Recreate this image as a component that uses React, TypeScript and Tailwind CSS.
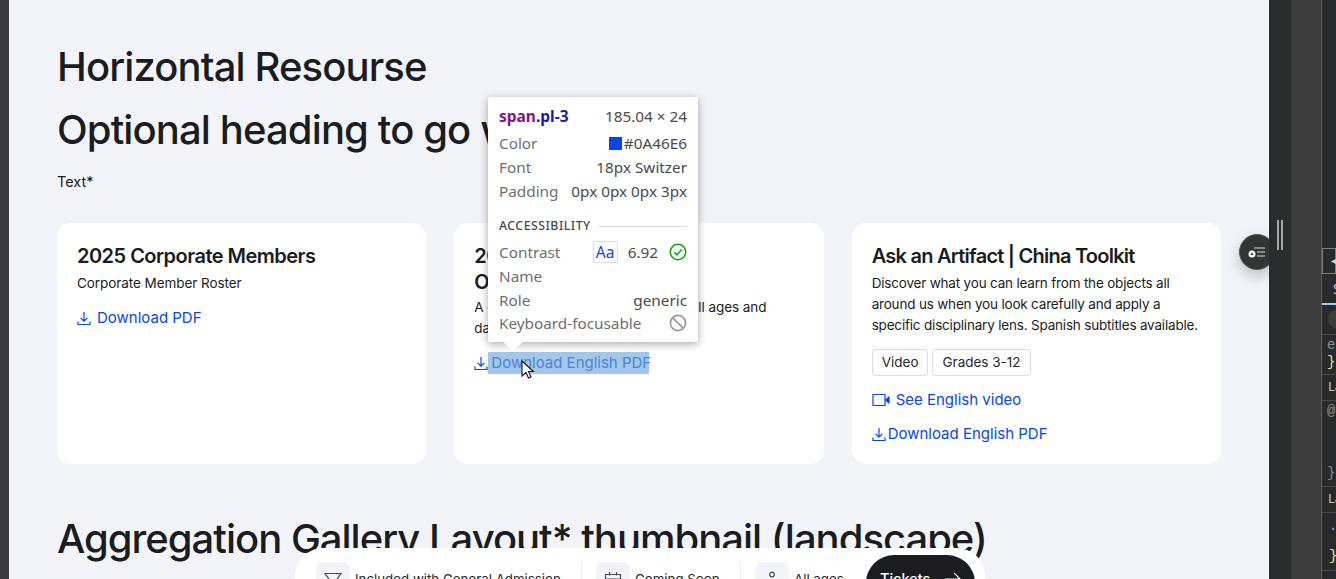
import React from "react";

const inter = "font-['Inter',sans-serif]";

function DownloadIcon({ className = "" }: { className?: string }) {
  return (
    <svg width="14" height="15" viewBox="0 0 14 15" fill="none" stroke="#0a46e6" strokeWidth="1.2" className={className}>
      <path d="M7 1v9M3.600 6.800 7 10.200l3.400-3.400M1 10.500v3h12v-3" />
    </svg>
  );
}

function Tag({ children }: { children: React.ReactNode }) {
  return (
    <span className="h-[27px] px-[9px] flex items-center rounded-[3px] border border-[#dcdde3] text-[13.5px] text-[#27282c]">
      {children}
    </span>
  );
}

function Row({ label, children }: { label: string; children?: React.ReactNode }) {
  return (
    <div className="h-[24px] flex items-center justify-between">
      <span className="text-[#6f6f6f]">{label}</span>
      <span className="flex items-center text-[#4a4a4a]">{children}</span>
    </div>
  );
}

function Tooltip() {
  return (
    <div className="absolute left-[479px] top-[97px] w-[210px] h-[245px] bg-white rounded-[3px] shadow-[0_2px_8px_rgba(0,0,0,0.35)] px-[11px] pt-[7px] text-[15.300px] leading-[24px] font-['Noto_Sans',sans-serif]">
      <div className="h-[24px] mb-[3px] flex items-center justify-between">
        <span className="font-bold text-[15.500px]">
          <span className="text-[#881280]">span</span>
          <span className="text-[#1a1aa6]">.pl-3</span>
        </span>
        <span className="text-[#4a4a4a]">185.04 × 24</span>
      </div>
      <Row label="Color">
        <span className="w-[13px] h-[13px] bg-[#0a46e6] mr-[2px]" />
        #0A46E6
      </Row>
      <Row label="Font">18px Switzer</Row>
      <Row label="Padding">0px 0px 0px 3px</Row>
      <div className="flex items-center gap-[8px] mt-[11px] h-[24px]">
        <span className="text-[12.300px] font-medium tracking-[0.04em] text-[#4a4a4a]">ACCESSIBILITY</span>
        <span className="flex-1 h-px bg-[#dadada]" />
      </div>
      <div className="h-[24px] mt-[2px] flex items-center">
        <span className="text-[#6f6f6f] flex-1">Contrast</span>
        <span className="w-[25px] h-[22px] border border-[#dcdcdc] text-[#0a46e6] flex items-center justify-center text-[15.500px]">Aa</span>
        <span className="text-[#4a4a4a] ml-[10px] mr-[11px]">6.92</span>
        <svg width="18" height="18" viewBox="0 0 17 17" fill="none" stroke="#0ca30c" strokeWidth="1.4">
          <circle cx="8.500" cy="8.500" r="7.300" />
          <path d="m5 8.700 2.500 2.500 4.600-5" />
        </svg>
      </div>
      <Row label="Name" />
      <Row label="Role">generic</Row>
      <div className="h-[23px] mt-[-1px] flex items-center justify-between">
        <span className="text-[#6f6f6f]">Keyboard-focusable</span>
        <svg width="18" height="18" viewBox="0 0 17 17" fill="none" stroke="#9a9a9a" strokeWidth="1.600">
          <circle cx="8.500" cy="8.500" r="7.200" />
          <path d="m3.400 3.400 10.200 10.200" />
        </svg>
      </div>
      <span className="absolute left-[15px] bottom-[-9px] w-0 h-0 border-l-[10px] border-r-[10px] border-t-[9px] border-l-transparent border-r-transparent border-t-white" />
    </div>
  );
}

function BottomItem({ label, icon, divider = true, width }: { label: string; icon: React.ReactNode; divider?: boolean; width: string }) {
  return (
    <div className={`flex items-start gap-[5px] h-[32px] mt-[14px] shrink-0 ${width} ${divider ? "border-r border-[#eceef3]" : ""}`}>
      <span className="w-[34px] h-[34px] rounded-[8px] bg-[#f3f4fa] flex items-center justify-center shrink-0 pt-[4px]">{icon}</span>
      <span className="text-[13.300px] leading-[34px] text-[#27282c] whitespace-nowrap">{label}</span>
    </div>
  );
}

function BottomBar() {
  return (
    <div className={`absolute left-[286px] top-[548px] w-[690px] h-[70px] bg-white rounded-t-[28px] flex pl-[21px] gap-[14px] ${inter}`}>
      <BottomItem
        width="w-[266px]"
        label="Included with General Admission"
        icon={
          <svg width="20" height="20" viewBox="0 0 20 20" fill="none" stroke="#4a4b50" strokeWidth="1.200">
            <path d="M2 2.500h16l-5 7v8H7v-8z" />
            <path d="M9 6h.01M11 8h.01" />
          </svg>
        }
      />
      <BottomItem
        width="w-[145px]"
        label="Coming Soon"
        icon={
          <svg width="18" height="20" viewBox="0 0 18 20" fill="none" stroke="#4a4b50" strokeWidth="1.200">
            <path d="M1.500 3.500h15v14h-15zM1.500 8h15M5.500 1v3.500M12.500 1v3.500" />
          </svg>
        }
      />
      <BottomItem
        width="w-[97px]"
        divider={false}
        label="All ages"
        icon={
          <svg width="18" height="20" viewBox="0 0 18 20" fill="none" stroke="#4a4b50" strokeWidth="1.200">
            <circle cx="9" cy="3.500" r="2.300" />
            <path d="M4 17c0-4 2-6 5-6s5 2 5 6" />
          </svg>
        }
      />
      <div className="mt-[7px] w-[109px] h-[56px] rounded-[28px] bg-[#1b1c20] text-white text-[14.500px] font-medium flex items-start pt-[13px] pl-[14px] gap-[15px] leading-[22px] shrink-0">
        Tickets
        <svg width="16" height="14" viewBox="0 0 16 14" fill="none" stroke="#fff" strokeWidth="1.200" className="mt-[4px]">
          <path d="M0 7h15M9 1l6 6-6 6" />
        </svg>
      </div>
    </div>
  );
}

function Card({ children }: { children: React.ReactNode }) {
  return <div className="flex-1 h-[241px] bg-white rounded-[14px] px-[20px] pt-[20px] text-[#1b1c20]">{children}</div>;
}

const cardTitle = "text-[20px] leading-[26px] font-semibold text-[#1b1c20]";
const cardBody = "text-[13.500px] leading-[21px] text-[#1b1c20]";
const link = "text-[15px] leading-[24px] text-[#0a46e6]";

export default function App() {
  return (
    <div className={`w-[1336px] h-[579px] overflow-hidden flex bg-[#2a2b2b] ${inter}`}>
      <div className="w-[9px] bg-[#3b3b3b] shrink-0" />
      <main className="w-[1260px] shrink-0 relative overflow-hidden bg-[#f3f4fa] pl-[48px] pr-[48px] pt-[41px]">
        <h1 className="text-[40px] leading-[52px] font-medium tracking-[-0.022em] text-[#1b1c20]">Horizontal Resourse</h1>
        <h2 className="mt-[11px] text-[40px] leading-[52px] font-medium tracking-[-0.022em] text-[#1b1c20] whitespace-nowrap">
          Optional heading to go with it
        </h2>
        <p className="mt-[15px] text-[14.500px] leading-[22px] text-[#1b1c20]">Text*</p>

        <div className="mt-[30px] flex gap-[28px]">
          <Card>
            <h3 className={`${cardTitle} tracking-[-0.026em]`}>2025 Corporate Members</h3>
            <p className={`${cardBody} tracking-[-0.005em] mt-[4px]`}>Corporate Member Roster</p>
            <div className={`${link} mt-[12px] flex items-center gap-[6px]`}>
              <DownloadIcon />
              Download PDF
            </div>
          </Card>
          <Card>
            <h3 className={`${cardTitle} tracking-[-0.03em]`}>
              2025 Ask an Artifact
              <br />
              Online Toolkit
            </h3>
            <p className={`${cardBody} tracking-[-0.005em] mt-[2px] whitespace-nowrap`}>
              A closer look at Asian artifacts for all ages and
              <br />
              daily practice
            </p>
            <div className={`${link} mt-[13px] flex items-center`}>
              <DownloadIcon />
              <span className="pl-[3px] h-[22px] leading-[22px] bg-[#a3c7e8] text-[#4a84dc] w-[161px] whitespace-nowrap">Download English PDF</span>
            </div>
          </Card>
          <Card>
            <h3 className={`${cardTitle} tracking-[-0.038em]`}>Ask an Artifact | China Toolkit</h3>
            <p className={`${cardBody} tracking-[-0.014em] mt-[4px]`}>
              Discover what you can learn from the objects all around us when you look carefully and apply a specific disciplinary lens. Spanish subtitles available.
            </p>
            <div className="mt-[13px] flex gap-[4px]">
              <Tag>Video</Tag>
              <Tag>Grades 3-12</Tag>
            </div>
            <div className={`${link} mt-[12px] flex items-center gap-[6px]`}>
              <svg width="18" height="14" viewBox="0 0 18 14" fill="none" stroke="#0a46e6" strokeWidth="1.200">
                <path d="M1 1.500h12v11H1z" />
                <path d="m13.500 7 3.500-3v6z" fill="#0a46e6" />
              </svg>
              See English video
            </div>
            <div className={`${link} mt-[10px] flex items-center`}>
              <DownloadIcon />
              <span className="pl-[2px]">Download English PDF</span>
            </div>
          </Card>
        </div>

        <h2 className="mt-[49px] text-[40px] leading-[52px] font-medium tracking-[-0.025em] text-[#1b1c20] whitespace-nowrap">
          Aggregation Gallery Layout* thumbnail (landscape)
        </h2>

        <Tooltip />
        <BottomBar />

        {/* pointer */}
        <svg width="14" height="20" viewBox="0 0 14 20" className="absolute left-[512px] top-[360px]">
          <path d="M1 1v15l4-3.500 2.500 5.500 2.500-1-2.500-5.500H12.500z" fill="#fff" stroke="#111" strokeWidth="1.100" />
        </svg>

        {/* floating round button */}
        <div className="absolute left-[1230px] top-[234px] w-[36px] h-[36px] rounded-full bg-[#333436] border border-[#55565a] shadow-[0_6px_14px_rgba(0,0,0,0.22)] flex items-center justify-center">
          <svg width="18" height="14" viewBox="0 0 18 14" fill="none">
            <path d="M6 3h11M9 7h8M9 11h8" stroke="#d9d9d9" strokeWidth="1.200" />
            <circle cx="4" cy="9" r="3.500" fill="#fff" />
            <path d="m4 7.500 1.600 2.600H2.400z" fill="#333436" />
          </svg>
        </div>
      </main>

      <div className="w-[22px] shrink-0 bg-[#2a2b2b] flex items-start justify-center pt-[220px]">
        <div className="flex gap-[2px]">
          <span className="w-[2px] h-[30px] bg-[#a8a8a8]" />
          <span className="w-[2px] h-[30px] bg-[#a8a8a8]" />
        </div>
      </div>
      <div className="w-[31px] shrink-0 bg-[#3c3c3c] border-r border-[#5c5c5c]" />
      <aside className="flex-1 bg-[#292a2b] flex flex-col pt-[248px] text-[14px] font-['Liberation_Mono',monospace] overflow-hidden text-[#d4d4d4] whitespace-nowrap">
        <div className="h-[26px] border border-[#808080] flex items-center pl-[8px] text-[10px]">◀</div>
        <div className="h-[31px] border-b-2 border-[#a8c7fa] pl-[11px] pt-[4px] text-[#a8c7fa] font-['Noto_Sans',sans-serif]">S</div>
        <div className="h-[30px] border-b border-[#4a4a4a] pl-[6px] pt-[4px]">
          <div className="w-[20px] h-[20px] rounded-full bg-[#3c3c3c]" />
        </div>
        <div className="h-[40px] border-b border-[#4a4a4a] leading-[17px] pl-[5px] pt-[2px]">
          <div className="text-[#8c8c8c]">e:</div>
          <div className="text-[#f0e68c]">{"}"}</div>
        </div>
        <div className="h-[26px] border-b border-[#4a4a4a] pl-[6px] pt-[2px] text-[13px] font-['Noto_Sans',sans-serif] text-[#c8c8c8]">La</div>
        <div className="h-[86px] border-b border-[#4a4a4a] pl-[5px] leading-[17px] pt-[2px] text-[#8c8c8c]">
          <div>@n</div>
          <div className="mt-[45px]">{"}"}</div>
        </div>
        <div className="h-[26px] border-b border-[#4a4a4a] pl-[6px] pt-[2px] text-[13px] font-['Noto_Sans',sans-serif] text-[#c8c8c8]">La</div>
        <div className="h-[58px] border-b border-[#4a4a4a] pl-[7px] leading-[17px] pt-[5px]">
          <div className="text-[#5db0f5]">.s</div>
          <div className="mt-[13px] text-[#f0e68c]">{"}"}</div>
        </div>
      </aside>
    </div>
  );
}
